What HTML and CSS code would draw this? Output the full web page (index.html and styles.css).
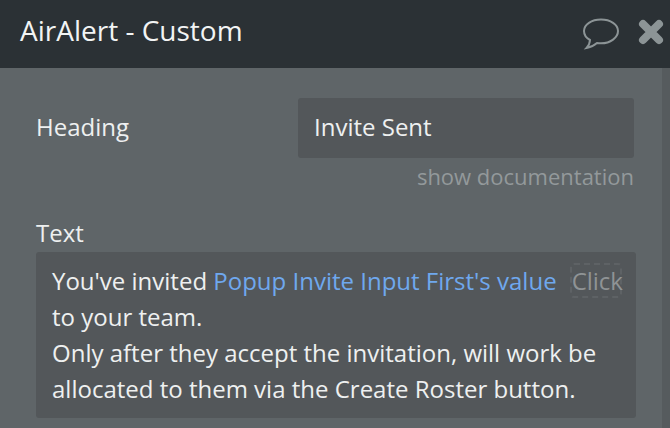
FILE: index.html
```html
<!DOCTYPE html>
<html lang="en">
<head>
<meta charset="utf-8">
<title>AirAlert - Custom</title>
<link rel="stylesheet" href="styles.css">
</head>
<body>
<div class="panel">
  <header class="titlebar">
    <div class="title">AirAlert - Custom</div>
    <div class="actions">
      <svg class="icon-comment" width="38" height="32" viewBox="0 0 38 32"><path d="M19 1.500C9.500 1.500 2 6.500 2 13C2 16.500 4 19.800 8 22C7.800 25 6.500 28 4.500 30C8 29.500 12 27.500 15 25C16.300 25.200 17.600 25.300 19 25.300C28.500 25.300 36 19.500 36 13C36 6.500 28.500 1.500 19 1.500Z" fill="none" stroke="#8c9496" stroke-width="2"/></svg>
      <svg class="icon-close" width="26" height="26" viewBox="0 0 26 26"><path d="M5 5L21 21M21 5L5 21" fill="none" stroke="#8c9496" stroke-width="8" stroke-linecap="round"/></svg>
    </div>
  </header>
  <main class="body">
    <div class="row-heading">
      <div class="label">Heading</div>
      <div class="field-col">
        <div class="input">Invite Sent</div>
        <div class="doc">show documentation</div>
      </div>
    </div>
    <div class="label text-label">Text</div>
    <div class="textarea">
      <div class="line">You've invited <span class="dyn">Popup Invite Input First's value</span><span class="click">Click</span></div>
      <div class="line">to your team.</div>
      <div class="line">Only after they accept the invitation, will work be</div>
      <div class="line">allocated to them via the Create Roster button.</div>
    </div>
  </main>
</div>
</body>
</html>
```
FILE: styles.css
```css
* { box-sizing: border-box; }
html, body { margin: 0; height: 100%; overflow: hidden; }
body { background: #5f6568; font-family: "Open Sans", sans-serif; color: #eef0f0; }
.panel { width: 670px; height: 428px; display: flex; flex-direction: column; }
.titlebar { height: 68px; flex: none; background: #2b3135; display: flex; align-items: center; justify-content: space-between; padding: 0 6px 8px 20px; }
.title { font-size: 28px; line-height: 34px; margin-top: -1px; color: #f2f4f4; }
.actions { display: flex; align-items: center; gap: 18px; margin-top: 4px; }
.icon-comment { margin-top: 4px; }
.body { flex: 1; padding: 30px 34px 0 36px; border-right: 8px solid #565b5e; }
.row-heading { display: flex; justify-content: space-between; margin-right: -6px; }
.label { font-size: 24px; line-height: 32px; color: #eef0f0; }
.row-heading .label { padding-top: 13px; }
.field-col { width: 336px; display: flex; flex-direction: column; align-items: flex-end; }
.input { width: 100%; height: 60px; background: #53575a; border-radius: 3px; padding: 0 16px 2px; font-size: 24px; line-height: 58px; }
.doc { font-size: 22px; line-height: 30px; margin-top: 3px; color: #93999b; }
.text-label { margin-top: 26px; }
.textarea { margin-top: 3px; width: 600px; height: 166px; background: #53575a; border-radius: 3px; padding: 11px 16px; font-size: 24px; line-height: 36px; }
.line { white-space: nowrap; height: 36px; }
.dyn { color: #6fa8ee; }
.click { display: inline-block; width: 52px; margin-left: 13px; line-height: 31px; color: #8f9395; border: 2px dashed #5e6265; border-radius: 4px; }
```
